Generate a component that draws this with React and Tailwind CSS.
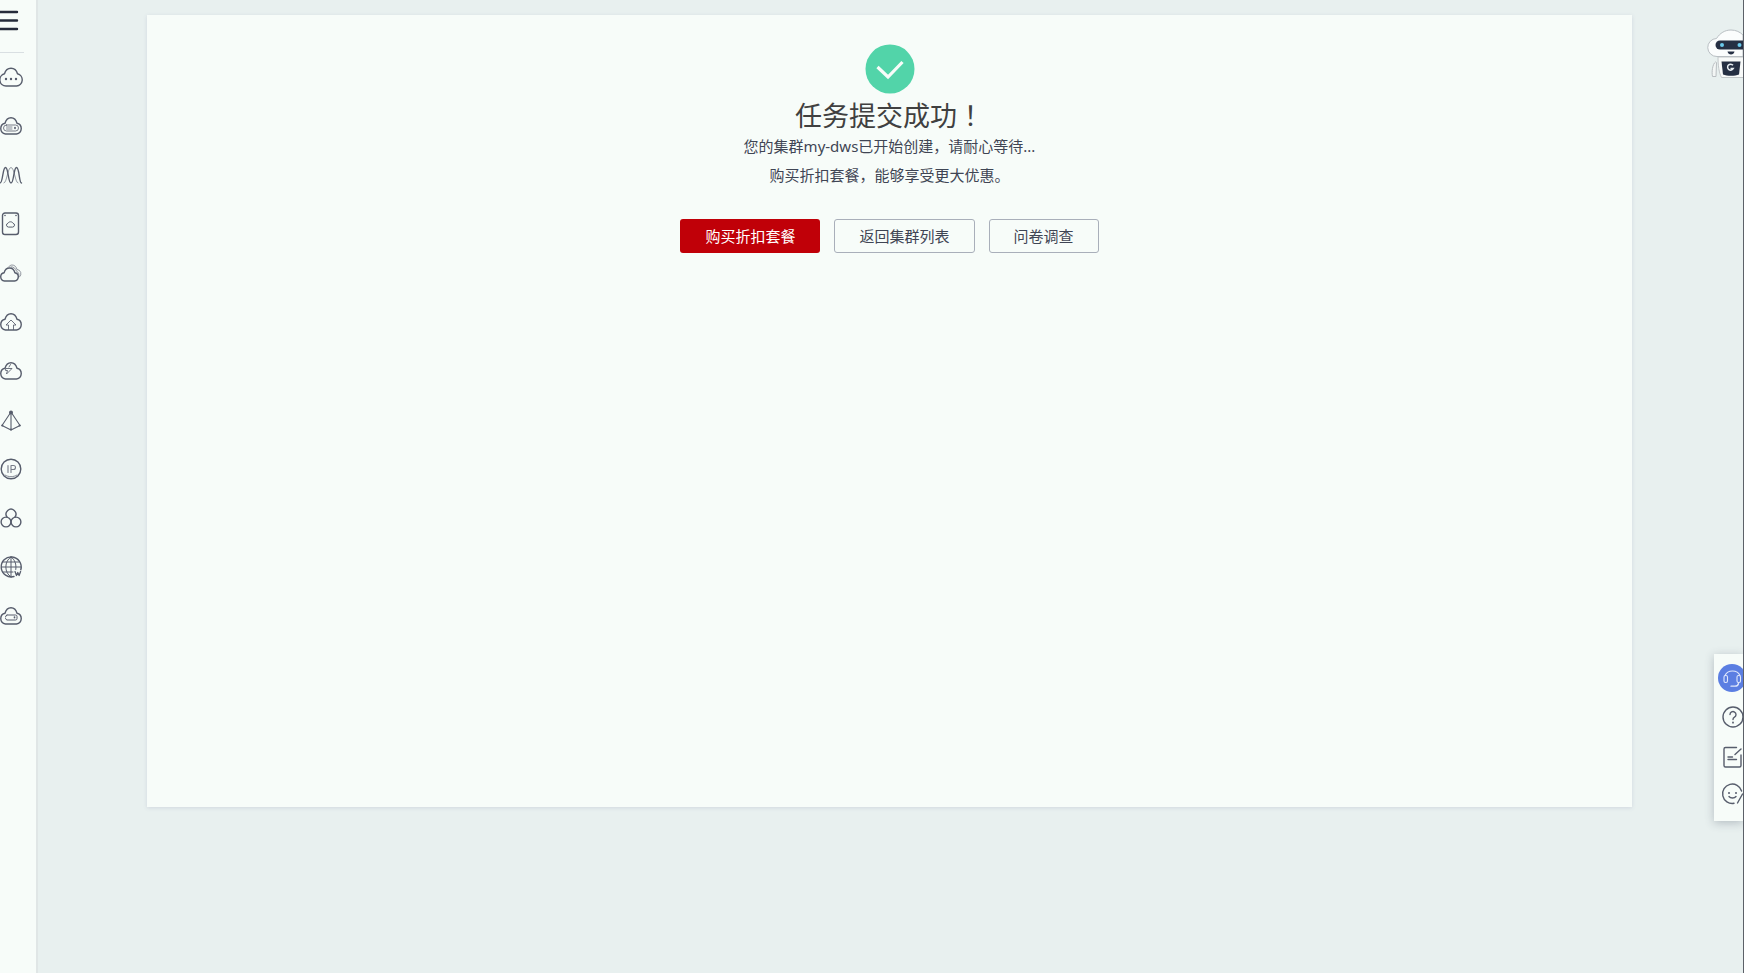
// src/pages/ClusterSubmitted.jsx
const Icon = ({ children, className = "h-6 w-6" }) => (
  <svg
    viewBox="0 0 24 24"
    fill="none"
    stroke="currentColor"
    strokeWidth="1.4"
    strokeLinecap="round"
    strokeLinejoin="round"
    aria-hidden="true"
    className={className}
  >
    {children}
  </svg>
);

const CLOUD = "M5.500 20a5.500 5.500 0 0 1-.5-10.800C6 5.500 8 3.700 11 3.700s5 1.800 6 5.500a5.500 5.500 0 0 1-.5 10.800z";

const services = [
  {
    name: "云服务",
    icon: (
      <>
        <path d="M6 21a6.200 6.200 0 0 1-1.500-12.200C5.500 5 8 3.200 11 3.200s5.500 1.800 6.500 5.600A6.200 6.200 0 0 1 16.500 21z" />
        <path d="M6 14h.01M11 14h.01M16 14h.01" strokeWidth="2.400" />
      </>
    ),
  },
  {
    name: "弹性云服务器",
    icon: (
      <>
        <path d={CLOUD} />
        <rect x="3.500" y="11" width="15" height="6" rx="3" strokeWidth="1" opacity=".8" />
        <path d="M6.500 13h5.500M6.500 15h5.500" strokeWidth="1" opacity=".7" />
        <path d="M15 13.500v1" strokeWidth="1.600" />
      </>
    ),
  },
  {
    name: "弹性伸缩",
    icon: (
      <>
        <path d="M0 20C3 20 2.500 4.500 5.500 4.500S8 20 11 20s2.500-15.500 5.500-15.500S19 20 21.500 20" />
        <path d="M4 20C7 20 7.500 4.500 11 4.500S15 20 18 20" strokeWidth="1" opacity=".6" />
      </>
    ),
  },
  {
    name: "云硬盘",
    icon: (
      <>
        <rect x="2.500" y="1" width="16" height="21.500" rx="2.500" />
        <path d="M5 3.500h.01M16 3.500h.01" strokeWidth="1.600" />
        <path d="M8 15a1.900 1.900 0 0 1-.1-3.700c.9-2 4.300-2 5.200 0A1.900 1.900 0 0 1 13 15z" strokeWidth="1" />
      </>
    ),
  },
  {
    name: "专属云",
    icon: (
      <>
        <path d="M4.500 20a4.200 4.200 0 0 1-.4-8.300C5 8.500 7 7 9.500 7s4.500 1.500 5.400 4.700A4.200 4.200 0 0 1 14.500 20z" />
        <path d="M8.500 6C9.500 4.700 10.800 4 12 4c2.500 0 4.300 1.700 5 4.500a4.300 4.300 0 0 1 2.500 7.500M11 5.800c3 0 4.600 1.700 5.400 4.300a4 4 0 0 1 2 5.900" strokeWidth=".9" opacity=".7" />
      </>
    ),
  },
  {
    name: "云备份",
    icon: (
      <>
        <path d={CLOUD} />
        <path d="M8.500 19.500V15H6l5-5 5 5h-2.500v4.500" strokeWidth="1" opacity=".85" />
      </>
    ),
  },
  {
    name: "对象存储",
    icon: (
      <>
        <path d={CLOUD} />
        <path d="M6 9.500h6L6.500 15l1-3.500H6zM10.500 5.500L9 8" strokeWidth="1" opacity=".85" />
      </>
    ),
  },
  {
    name: "虚拟私有云",
    icon: (
      <>
        <path d="M11 4L2 17.500l9 4.500 9-4.500zM11 4v18" strokeWidth="1.100" />
        <circle cx="11" cy="4.500" r="1.300" fill="currentColor" />
        <path d="M2.300 17.500h.01M19.700 17.500h.01M11 21.500h.01" strokeWidth="2.200" />
      </>
    ),
  },
  {
    name: "弹性公网IP",
    icon: (
      <>
        <circle cx="11" cy="12" r="9.800" />
        <path d="M8 8.500v7M11 15.500v-7h2.500a2 2 0 0 1 0 4H11" strokeWidth="1.100" opacity=".8" />
        <path d="M5 18c3.500 2.300 8.500 2.300 12 0" strokeWidth="1" opacity=".7" />
      </>
    ),
  },
  {
    name: "云数据库",
    icon: (
      <>
        <circle cx="6" cy="16" r="4.900" />
        <circle cx="16" cy="16" r="4.900" />
        <path d="M7 11a4.900 4.900 0 1 1 8 0" />
      </>
    ),
  },
  {
    name: "域名注册",
    icon: (
      <>
        <path d="M14 21.500a10 10 0 1 1 6.800-6.800" />
        <path d="M11 2C4 6 4 18 11 21.800M11 2c4 2.500 5.500 7.500 4.800 12.500M11 2v20M1.500 12h19.500M2.800 7h16.500M2.800 17H13" strokeWidth="1" />
        <path d="M15 16.500l1.500 4 1.300-3 1.300 3 1.500-4" strokeWidth="1.300" />
      </>
    ),
  },
  {
    name: "云专线",
    icon: (
      <>
        <path d={CLOUD} />
        <path d="M7 11h8.500a1.500 1.500 0 0 1 1.500 1.500v2a1.500 1.500 0 0 1-1.500 1.500H7a2 2 0 0 1-1.500-1.500M5.500 13A2 2 0 0 1 7 11" strokeWidth="1" />
        <path d="M14.500 13v.8" strokeWidth="1.600" />
      </>
    ),
  },
];

const tools = [
  {
    name: "帮助",
    icon: (
      <>
        <circle cx="12" cy="12" r="10" />
        <path d="M9 9.500a3 3 0 1 1 4.500 2.700c-1 .6-1.500 1.100-1.500 2.300" />
        <path d="M12 17.500v.2" strokeWidth="1.800" />
      </>
    ),
  },
  {
    name: "建议",
    icon: (
      <>
        <path d="M15.500 2.500H4.500A1.500 1.500 0 0 0 3 4v16.500A1.500 1.500 0 0 0 4.500 22h14a1.500 1.500 0 0 0 1.500-1.500V10M20 4l-6 5.500M7 12h4.500M7 14.500h8.500" />
      </>
    ),
  },
  {
    name: "满意度",
    icon: (
      <>
        <path d="M13 21.300A9.700 9.700 0 1 1 20.600 9" />
        <path d="M21.500 12l-5 9" />
        <path d="M8 11h.01M15 11h.01" strokeWidth="2" />
        <path d="M8 14.500c1.500 2 5.500 2 7 0" />
      </>
    ),
  },
];

const SideBar = () => (
  <aside className="w-[38px] shrink-0 border-r-2 border-[#e0e6e6] bg-[#f7fcf9] text-[#575d6c]">
    <button type="button" aria-label="菜单" className="block h-[52px] w-6 pt-[9px] pb-5 text-[#252b3a]">
      <svg viewBox="0 0 24 23" className="h-[23px] w-6" stroke="currentColor" strokeWidth="2.400" strokeLinecap="round">
        <path d="M-2 3h19M-2 11.500h19M-2 20h19" />
      </svg>
    </button>
    <nav className="w-6 border-t border-[#d9dfe2]">
      {services.map((service) => (
        <a key={service.name} href="#" aria-label={service.name} className="flex h-[49px] items-center pb-[2px]">
          <Icon>{service.icon}</Icon>
        </a>
      ))}
    </nav>
  </aside>
);

const Robot = () => (
  <svg viewBox="0 0 36 50" className="h-[50px] w-9" aria-hidden="true">
    <path d="M8.500 33c-3 2-4 10-3 14.500h3.500l.5-14z" fill="#f3f6f5" stroke="#b9bec1" />
    <path d="M11 28h28v20.500H14.500C12 44 11 36 11 28z" fill="#f8faf9" stroke="#c3c8ca" />
    <path d="M14.500 32.500h19l-1.500 13c-4 1.800-12 1.800-16 0z" fill="#252f43" />
    <path d="M26 36.300a3 3 0 1 0 .3 3.200H23.500" fill="none" stroke="#e8eef2" strokeWidth="1.500" />
    <path d="M10 27.500A9 9 0 0 1 9.500 9.500C13 4 18 1 24 1c5 0 9 2 12 5v21.500z" fill="#fbfdfd" stroke="#b9bfc3" />
    <rect x="8.500" y="11.500" width="34" height="9" rx="4.500" fill="#252f43" />
    <circle cx="15" cy="16" r="2" fill="#69c8ea" />
    <circle cx="32.500" cy="16" r="2" fill="#69c8ea" />
    <path d="M20.500 22.500h7c-.5 4-6.500 4-7 0z" fill="#252f43" />
  </svg>
);

const HelpPanel = () => (
  <div className="absolute right-0 top-[654px] flex w-[29px] flex-col overflow-hidden bg-[#f7fcf9] pt-[10px] pb-[10px] text-[#575d6c] shadow-[0_2px_10px_rgba(60,70,90,0.3)]">
    <button
      type="button"
      aria-label="在线客服"
      className="ml-1 flex size-7 shrink-0 items-center justify-center rounded-full bg-[#5b7ee2] text-[#dfe7fc]"
    >
      <Icon className="size-6 shrink-0">
        <path d="M5 9.500a8 7 0 0 1 15 0" strokeWidth="1.100" />
        <rect x="4" y="9.500" width="3.500" height="7" rx="1.500" strokeWidth="1.100" />
        <rect x="17" y="9.500" width="3.500" height="7" rx="1.500" strokeWidth="1.100" />
        <path d="M18.500 17.500c-.5 2-2 2.700-3.500 2.700h-4" strokeWidth="1.300" />
      </Icon>
    </button>
    <div className="ml-[7px] mt-[5px] flex flex-col">
      {tools.map((tool) => (
        <button key={tool.name} type="button" aria-label={tool.name} className="flex h-10 w-6 items-center last:h-[34px]">
          <Icon className="size-6 shrink-0">{tool.icon}</Icon>
        </button>
      ))}
    </div>
  </div>
);

const App = () => {
  return (
    <div className="relative flex h-screen overflow-hidden border-r border-[#5c6068] bg-[#e8f0ef] font-['Noto_Sans','Noto_Sans_CJK_SC',sans-serif] text-[15px] text-[#3f4554]">
      <SideBar />

      <main className="flex flex-1 flex-col pt-[15px] pr-[111px] pb-[166px] pl-[109px]">
        <section className="flex flex-1 flex-col items-center bg-[#f7fcf9] pt-[29px] shadow-[0_1px_4px_rgba(90,90,140,0.16)]">
          <svg viewBox="0 0 50 50" className="size-[50px]" aria-hidden="true">
            <circle cx="25" cy="25" r="24.500" fill="#52d4a9" />
            <path d="M12.500 23l10.500 10 14.500-15" fill="none" stroke="#f7fcf9" strokeWidth="3.200" />
          </svg>
          <h1 className="mt-[5px] text-[27px] leading-[33px] text-[#404040]">
            任务提交成功<span className="font-['Noto_Sans_CJK_TC',sans-serif] leading-none">！</span>
          </h1>
          <p className="leading-[29px]">您的集群my-dws已开始创建，请耐心等待...</p>
          <p className="leading-[29px]">购买折扣套餐，能够享受更大优惠。</p>

          {/* Actions */}
          <div className="mt-[29px] flex gap-[14px]">
            <button type="button" className="h-[34px] rounded-[3px] bg-[#c00008] px-[25px] text-white">
              购买折扣套餐
            </button>
            <button type="button" className="h-[34px] rounded-[3px] border border-[#a9afba] px-6">
              返回集群列表
            </button>
            <button type="button" className="h-[34px] rounded-[3px] border border-[#a9afba] px-6">
              问卷调查
            </button>
          </div>
        </section>
      </main>

      <button type="button" aria-label="智能助手" className="absolute right-0 top-[29px]">
        <Robot />
      </button>
      <HelpPanel />
    </div>
  );
};

export default App;
